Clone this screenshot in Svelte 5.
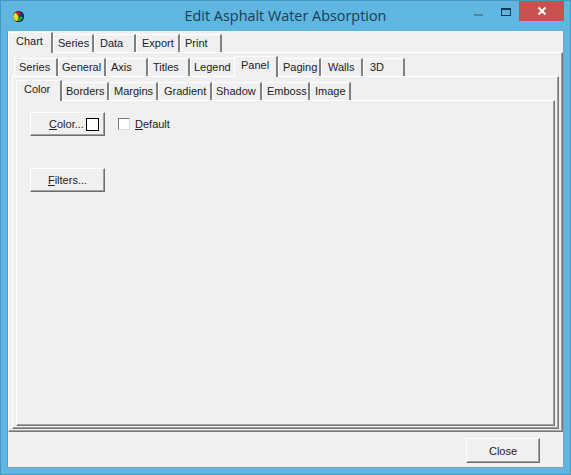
<script>
  const row1 = [
    { label: 'Chart', w: 45, p: 7, selected: true },
    { label: 'Series', w: 41, p: 4 },
    { label: 'Data', w: 42, p: 5 },
    { label: 'Export', w: 44, p: 5 },
    { label: 'Print', w: 42, p: 4 }
  ];
  const row2 = [
    { label: 'Series', w: 44, p: 4 },
    { label: 'General', w: 48, p: 3 },
    { label: 'Axis', w: 42, p: 4 },
    { label: 'Titles', w: 42, p: 4 },
    { label: 'Legend', w: 46, p: 3 },
    { label: 'Panel', w: 44, p: 6, selected: true },
    { label: 'Paging', w: 43, p: 4 },
    { label: 'Walls', w: 42, p: 6 },
    { label: '3D', w: 42, p: 6 }
  ];
  const row3 = [
    { label: 'Color', w: 46, p: 7, selected: true },
    { label: 'Borders', w: 47, p: 3 },
    { label: 'Margins', w: 49, p: 4 },
    { label: 'Gradient', w: 54, p: 5 },
    { label: 'Shadow', w: 50, p: 3 },
    { label: 'Emboss', w: 48, p: 4 },
    { label: 'Image', w: 41, p: 4 }
  ];
</script>

{#snippet tabs(items)}
  <div class="tabs">
    {#each items as t}
      <div class="tab" class:selected={t.selected} style="width:{t.w}px;padding-left:{t.p}px">{t.label}</div>
    {/each}
  </div>
{/snippet}

<div class="window">
  <header class="titlebar">
    <svg class="appicon" width="11" height="11" viewBox="0 0 12 12">
      <circle cx="6" cy="6" r="6" fill="#111" />
      <path d="M6 6L3 1.5A5 5 0 0 1 8.5 1.6z" fill="#d02020" />
      <path d="M6 6L8.5 1.6A5 5 0 0 1 11 6.5z" fill="#2030c0" />
      <path d="M6 6L11 6.5A5 5 0 0 1 5 11z" fill="#20a040" />
      <path d="M6 6L5 11A5 5 0 0 1 3 1.5z" fill="#e8e020" />
    </svg>
    <h1>Edit Asphalt Water Absorption</h1>
    <div class="caption">
      <span class="min"></span>
      <span class="max"></span>
      <span class="close">
        <svg width="10" height="10" viewBox="0 0 10 10"><path d="M1.5 1.5l7 7M8.5 1.5l-7 7" stroke="#fff" stroke-width="2" /></svg>
      </span>
    </div>
  </header>
  <main class="client">
    <div class="tabset outer">
      {@render tabs(row1)}
      <div class="panel">
        <div class="tabset">
          {@render tabs(row2)}
          <div class="panel">
            <div class="tabset">
              {@render tabs(row3)}
              <div class="panel content">
                <div class="line color-line">
                  <button class="btn color-btn"><span class="btn-label"><u>C</u>olor...</span><span class="swatch"></span></button>
                  <label class="check"><span class="box"></span><span><u>D</u>efault</span></label>
                </div>
                <button class="btn filters"><u>F</u>ilters...</button>
              </div>
            </div>
          </div>
        </div>
      </div>
    </div>
    <footer class="footer">
      <button class="btn closebtn">Close</button>
    </footer>
  </main>
</div>

<style>
  :global(body) { margin: 0; }
  * { box-sizing: border-box; }
  .window {
    width: 571px;
    height: 475px;
    background: #5fb6e0;
    border: 1px solid #4a97bd;
    padding: 0 7px 7px;
    display: flex;
    flex-direction: column;
    font: 11px "Liberation Sans", Arial, sans-serif;
    color: #222;
  }
  .titlebar {
    height: 30px;
    flex: none;
    display: flex;
    align-items: flex-start;
    position: relative;
  }
  .appicon { margin: 10px 0 0 5px; }
  h1 {
    margin: 0;
    position: absolute;
    left: 0;
    right: 0;
    top: 5px;
    text-align: center;
    font: 400 14.4px "Open Sans", sans-serif;
    color: #1c3d50;
    line-height: 20px;
  }
  .caption {
    margin-left: auto;
    margin-right: -1px;
    display: flex;
    align-items: flex-start;
    position: relative;
  }
  .min {
    width: 9px;
    height: 2px;
    background: #5a8196;
    margin: 13px 18px 0 0;
  }
  .max {
    width: 10px;
    height: 8px;
    border: 1px solid #123a52;
    border-top-width: 2px;
    margin: 7px 8px 0 0;
  }
  .close {
    width: 45px;
    height: 20px;
    background: #c75050;
    display: flex;
    align-items: center;
    justify-content: center;
  }
  .client {
    flex: 1;
    background: #f0f0f0;
    display: flex;
    flex-direction: column;
    min-height: 0;
    box-shadow: 0 1px 0 #8a9ba6, 1px 0 0 #7d9fb2, -1px 0 0 #4f9dc4;
  }
  .tabset {
    flex: 1;
    display: flex;
    flex-direction: column;
    min-height: 0;
  }
  .outer { height: 401px; flex: none; }
  .tabs {
    height: 21px;
    flex: none;
    display: flex;
    align-items: flex-end;
    padding-left: 2px;
    position: relative;
    z-index: 1;
  }
  .panel .tabs { height: 22px; }
  .tab {
    height: 18px;
    flex: none;
    background: #f0f0f0;
    border-top: 1px solid #fff;
    border-left: 1px solid #fff;
    border-right: 2px solid #808080;
    padding-top: 2px;
    line-height: 13px;
    white-space: nowrap;
  }
  .tab.selected {
    height: 21px;
    margin: 0 0 -1px -2px;
  }
  .panel {
    flex: 1;
    min-height: 0;
    display: flex;
    flex-direction: column;
    background: #f0f0f0;
    padding: 1px 2px 2px 2px;
    border-top: 1px solid #fff;
    border-left: 1px solid #fff;
    border-right: 1px solid #777;
    border-bottom: 1px solid #777;
    box-shadow: inset -1px -1px 0 #a0a0a0;
  }
  .panel > .tabset { padding: 0 1px 0 1px; }
  .content { padding: 11px 0 0 13px; display: block; }
  .line { display: flex; align-items: center; height: 24px; }
  .btn {
    width: 75px;
    height: 24px;
    padding: 0;
    background: #f0f0f0;
    border: 1px solid;
    border-color: #fff #6e6e6e #6e6e6e #fff;
    box-shadow: inset -1px -1px 0 #a0a0a0;
    font: inherit;
    color: #222;
    display: flex;
    align-items: center;
    justify-content: center;
  }
  .color-btn { justify-content: flex-start; }
  .btn-label { margin-left: 18px; }
  .swatch {
    width: 13px;
    height: 13px;
    background: #fff;
    border: 1px solid #000;
    margin-left: 2px;
  }
  .check { display: flex; align-items: center; margin-left: 13px; }
  .box {
    width: 12px;
    height: 12px;
    background: #fff;
    border: 1px solid;
    border-color: #777 #ddd #ddd #777;
    margin-right: 5px;
  }
  .filters { margin-top: 32px; }
  .footer {
    flex: 1;
    display: flex;
    justify-content: flex-end;
    align-items: flex-start;
    padding: 6px 23px 0 0;
  }
  .closebtn { width: 74px; height: 25px; }
</style>
